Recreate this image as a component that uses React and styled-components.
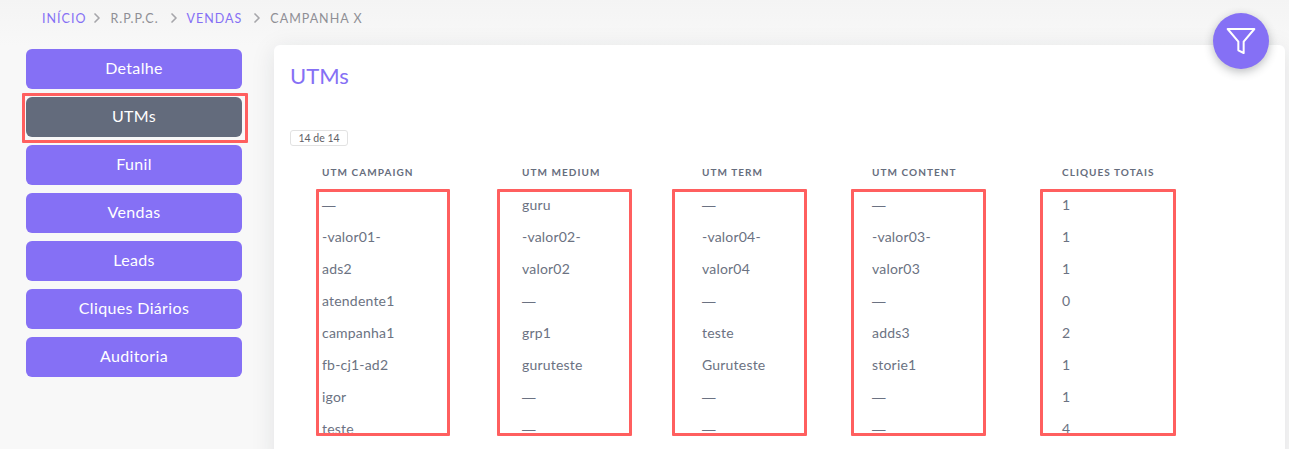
import React from 'react'
import styled, { createGlobalStyle } from 'styled-components'
import { FiChevronRight, FiFilter } from 'react-icons/fi'

const GlobalStyle = createGlobalStyle`
  html, body {
    margin: 0;
    height: 449px;
    overflow: hidden;
    background: #f8f8f8;
    font-family: 'Lato', 'Open Sans', sans-serif;
    color: #6e6b7b;
  }
  * { box-sizing: border-box; }
`

const Page = styled.div`
  position: relative;
  height: 449px;
  overflow: hidden;
  padding: 0 4px 0 26px;
  background: linear-gradient(180deg, #f4f4f4 0, #f8f8f8 45px);
`

const Breadcrumb = styled.nav`
  display: flex;
  align-items: center;
  height: 36px;
  padding-left: 16px;
  font-size: 12.5px;
  letter-spacing: 1px;
  text-transform: uppercase;
`

const Crumb = styled.span`
  margin-right: ${({ $tight }) => ($tight ? -4 : 0)}px;
  color: ${({ $link }) => ($link ? '#8570f5' : '#8f8f95')};
`

const Separator = styled(FiChevronRight)`
  width: 16px;
  height: 16px;
  margin: 0 5px 0 7px;
  color: #a6a6aa;
  stroke-width: 2.5;
`

const Content = styled.div`
  display: flex;
  align-items: flex-start;
  gap: 32px;
  margin-top: 9px;
`

const Sidebar = styled.aside`
  display: flex;
  flex-direction: column;
  gap: 8px;
  flex: 0 0 216px;
  margin-top: 4px;
`

const MenuButton = styled.a`
  display: flex;
  align-items: center;
  justify-content: center;
  height: 40px;
  padding-bottom: 4px;
  border-radius: 6px;
  background: ${({ $active }) => ($active ? '#636b7c' : '#8570f5')};
  color: #fff;
  font-size: 16px;
  letter-spacing: 0.35px;
`

const Card = styled.main`
  position: relative;
  flex: 1;
  height: 420px;
  padding: 15px 16px 16px;
  border-radius: 6px;
  background: #fff;
  box-shadow: 0 4px 24px rgba(34, 41, 47, 0.1);
`

const Title = styled.h2`
  margin: 0;
  height: 32px;
  color: #8570f5;
  font-size: 22px;
  font-weight: 400;
  line-height: 32px;
`

const Badge = styled.span`
  display: inline-block;
  margin-top: 38px;
  height: 16px;
  width: 58px;
  border: 1px solid #e2e2e2;
  border-radius: 3px;
  color: #5f5f66;
  font-size: 10.5px;
  line-height: 14px;
  text-align: center;
`

const Table = styled.div`
  display: grid;
  grid-template-columns: 200px 180px 170px 190px 1fr;
  height: 289px;
  overflow: hidden;
  margin-top: 9px;
  padding: 8px 0 0 32px;
`

const Column = styled.div`
  display: flex;
  flex-direction: column;
`

const Head = styled.div`
  height: 26px;
  color: #666d7d;
  font-size: 10px;
  font-weight: 700;
  letter-spacing: 1.05px;
  line-height: 18px;
  text-transform: uppercase;
`

const Cell = styled.div`
  height: 32px;
  color: #6b7282;
  font-size: 14px;
  letter-spacing: 0.2px;
  line-height: 32px;
`

const Dash = styled.span`
  font-family: 'Liberation Sans', sans-serif;
  font-size: 13.5px;
  letter-spacing: 0;
`

const Highlight = styled.div`
  position: absolute;
  top: ${({ $top }) => $top}px;
  left: ${({ $left }) => $left}px;
  width: ${({ $width }) => $width}px;
  height: ${({ $height }) => $height}px;
  border: 3px solid #ff5f5f;
  border-radius: 1px;
  pointer-events: none;
`

const ActiveFrame = styled(Highlight)`
  z-index: 1;
`

const Fab = styled.button`
  position: absolute;
  top: 13px;
  left: 1213px;
  display: flex;
  align-items: center;
  justify-content: center;
  width: 56px;
  height: 56px;
  padding: 0;
  border: 0;
  border-radius: 50%;
  background: #8570f5;
  color: #fff;
  box-shadow: 0 3px 10px rgba(34, 41, 47, 0.3);
`

const FilterIcon = styled(FiFilter)`
  width: 32px;
  height: 32px;
  stroke-width: 1.5;
`

const menu = ['Detalhe', 'UTMs', 'Funil', 'Vendas', 'Leads', 'Cliques Diários', 'Auditoria']

const columns = [
  { head: 'UTM Campaign', cells: ['—', '-valor01-', 'ads2', 'atendente1', 'campanha1', 'fb-cj1-ad2', 'igor', 'teste'], left: 316, width: 134 },
  { head: 'UTM Medium', cells: ['guru', '-valor02-', 'valor02', '—', 'grp1', 'guruteste', '—', '—'], left: 497, width: 135 },
  { head: 'UTM Term', cells: ['—', '-valor04-', 'valor04', '—', 'teste', 'Guruteste', '—', '—'], left: 672, width: 135 },
  { head: 'UTM Content', cells: ['—', '-valor03-', 'valor03', '—', 'adds3', 'storie1', '—', '—'], left: 851, width: 135 },
  { head: 'Cliques Totais', cells: ['1', '1', '1', '0', '2', '1', '1', '4'], left: 1040, width: 136 },
]

const App = () => {
  return (
    <Page>
      <GlobalStyle />
      <Breadcrumb>
        <Crumb $link $tight>Início</Crumb>
        <Separator />
        <Crumb>R.P.P.C.</Crumb>
        <Separator />
        <Crumb $link>Vendas</Crumb>
        <Separator />
        <Crumb>Campanha X</Crumb>
      </Breadcrumb>

      <Content>
        <Sidebar>
          {menu.map((item) => (
            <MenuButton key={item} $active={item === 'UTMs'}>
              {item}
            </MenuButton>
          ))}
        </Sidebar>

        <Card>
          <Title>UTMs</Title>
          <Badge>14 de 14</Badge>
          <Table>
            {columns.map((column) => (
              <Column key={column.head}>
                <Head>{column.head}</Head>
                {column.cells.map((cell, index) => (
                  <Cell key={index}>{cell === '—' ? <Dash>—</Dash> : cell}</Cell>
                ))}
              </Column>
            ))}
          </Table>
        </Card>
      </Content>

      <ActiveFrame $top={93} $left={22} $width={226} $height={50} />
      {columns.map((column) => (
        <Highlight key={column.head} $top={189} $left={column.left} $width={column.width} $height={247} />
      ))}

      <Fab aria-label="Filtrar">
        <FilterIcon />
      </Fab>
    </Page>
  )
}

export default App
